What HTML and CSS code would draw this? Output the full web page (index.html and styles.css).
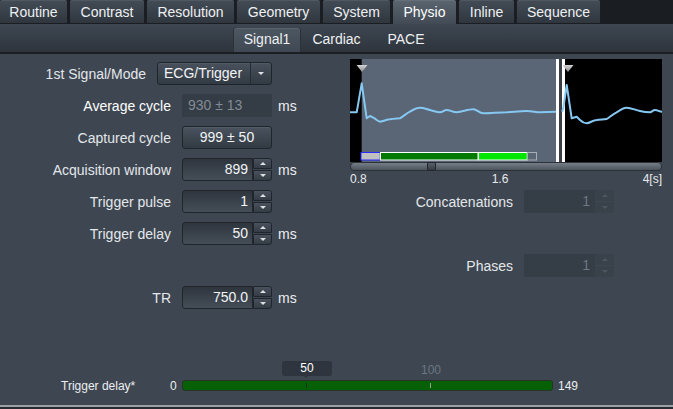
FILE: index.html
```html
<!DOCTYPE html>
<html>
<head>
<meta charset="utf-8">
<link rel="stylesheet" href="styles.css">
</head>
<body>
<div class="app">
  <nav class="tabs">
    <div class="tab">Routine</div>
    <div class="tab">Contrast</div>
    <div class="tab">Resolution</div>
    <div class="tab">Geometry</div>
    <div class="tab">System</div>
    <div class="tab active">Physio</div>
    <div class="tab">Inline</div>
    <div class="tab">Sequence</div>
  </nav>
  <nav class="subtabs">
    <div class="subtab w66 active">Signal1</div>
    <div class="subtab w73">Cardiac</div>
    <div class="subtab w66">PACE</div>
  </nav>
  <main class="content">
    <div class="panels">
      <section class="left">
        <div class="row">
          <label class="lbl short">1st Signal/Mode</label>
          <div class="dropdown">
            <span class="dd-text">ECG/Trigger</span>
            <span class="dd-btn"><i class="arr-down"></i></span>
          </div>
        </div>
        <div class="row">
          <label class="lbl bright">Average cycle</label>
          <div class="readonly">930 ± 13</div>
          <span class="unit">ms</span>
        </div>
        <div class="row">
          <label class="lbl">Captured cycle</label>
          <div class="button">999 ± 50</div>
        </div>
        <div class="row">
          <label class="lbl">Acquisition window</label>
          <div class="spin">
            <div class="value">899</div>
            <div class="arrows"><span><i class="arr-up"></i></span><span><i class="arr-down"></i></span></div>
          </div>
          <span class="unit">ms</span>
        </div>
        <div class="row">
          <label class="lbl">Trigger pulse</label>
          <div class="spin">
            <div class="value">1</div>
            <div class="arrows"><span><i class="arr-up"></i></span><span><i class="arr-down"></i></span></div>
          </div>
        </div>
        <div class="row">
          <label class="lbl">Trigger delay</label>
          <div class="spin">
            <div class="value">50</div>
            <div class="arrows"><span><i class="arr-up"></i></span><span><i class="arr-down"></i></span></div>
          </div>
          <span class="unit">ms</span>
        </div>
        <div class="row"></div>
        <div class="row">
          <label class="lbl">TR</label>
          <div class="spin">
            <div class="value">750.0</div>
            <div class="arrows"><span><i class="arr-up"></i></span><span><i class="arr-down"></i></span></div>
          </div>
          <span class="unit">ms</span>
        </div>
      </section>

      <section class="right">
        <svg class="chart" width="312" height="103" viewBox="0 0 312 103">
          <defs>
            <linearGradient id="tri" x1="0" y1="0" x2="0" y2="1">
              <stop offset="0" stop-color="#d4d4d4"/>
              <stop offset="1" stop-color="#8a8a8a"/>
            </linearGradient>
          </defs>
          <rect x="0" y="0" width="312" height="103" fill="#000"/>
          <rect x="11.7" y="0" width="194.3" height="103" fill="#5a6575"/>
          <rect x="206" y="0" width="3" height="103" fill="#fff"/>
          <rect x="209" y="0" width="3" height="103" fill="#3a3f45"/>
          <rect x="212" y="0" width="3" height="103" fill="#fff"/>
          <path fill="none" stroke="#86c8f2" stroke-width="2" stroke-linejoin="round"
            d="M0,53.3 L6.7,53.3 L11.7,24.3 L16.7,59.3 L20,57 L23.3,58.7 C26,60 28,62.7 30,62.7 C34,62 37,60.3 40,60.3 C44,59.8 47,59.6 50,59.3 C54,57 57,54 60,52.7 C64,50 67,48.7 70,48.7 C74,48.7 77,50.5 80,51 C84,52 87,53.3 90,53.3 C93,53 94,51 96.7,51 C100,51 103,53.3 106.7,53.3 C112,53 118,50.3 123.3,50.3 C127,50.3 129,54.3 133.3,54.3 C141,54.3 149,53.3 156.7,53.3 C163,53 170,52 176.7,52 C182,52 186,53.3 190,53.3 L206,52.7"/>
          <path fill="none" stroke="#86c8f2" stroke-width="2" stroke-linejoin="round"
            d="M212,52.7 L213.3,49.3 L216.7,26 L221.7,59.3 L226.7,57.7 L230,61 C232,63 234,64.3 236.7,64.3 C240,64 243,61 246.7,61 C250,60.5 253,60.5 256.7,60 C260,58 263,55 266.7,53.3 C270,51 273,48.7 276.7,48.7 C281,48.7 285,51 290,52 C294,53 297,53.3 300,53.3 C302,53 303,51 305,51 C308,51 309,52.7 312,52.7"/>
          <polygon points="6.5,6 17.5,6 12,13" fill="url(#tri)"/>
          <polygon points="212.5,6 223.5,6 218,13" fill="url(#tri)"/>
          <rect x="11" y="93.5" width="19.3" height="7.5" fill="#c0c0c0" stroke="#2a2aff" stroke-width="1"/>
          <rect x="30.5" y="93.5" width="97.5" height="7.5" fill="#007a00" stroke="#ffffff" stroke-width="1"/>
          <rect x="128.5" y="93.5" width="48.8" height="7.5" fill="#00e600" stroke="#ffffff" stroke-width="1"/>
          <rect x="177.5" y="93.5" width="9" height="7.5" fill="none" stroke="#a8aeb6" stroke-width="1"/>
        </svg>
        <div class="scroll"><div class="thumb"></div></div>
        <div class="axis">
          <span>0.8</span><span class="mid">1.6</span><span class="end">4[s]</span>
        </div>
        <div class="rrow first">
          <label class="rlbl">Concatenations</label>
          <div class="spin disabled">
            <div class="value">1</div>
            <div class="arrows"><span><i class="arr-up"></i></span><span><i class="arr-down"></i></span></div>
          </div>
        </div>
        <div class="rrow second">
          <label class="rlbl">Phases</label>
          <div class="spin disabled">
            <div class="value">1</div>
            <div class="arrows"><span><i class="arr-up"></i></span><span><i class="arr-down"></i></span></div>
          </div>
        </div>
      </section>
    </div>

    <section class="slider-row">
      <span class="s-label">Trigger delay*</span>
      <span class="s-min">0</span>
      <div class="track">
        <i class="tick t1"></i>
        <i class="tick t2"></i>
        <div class="tip">50</div>
        <div class="mark">100</div>
      </div>
      <span class="s-max">149</span>
    </section>
  </main>
  <footer class="edge"></footer>
</div>
</body>
</html>
```
FILE: styles.css
```css
* { box-sizing: border-box; }
body {
  margin: 0;
  background: #3d4651;
  font-family: "Liberation Sans", Arial, sans-serif;
  color: #e6e9ec;
}
.app {
  width: 673px;
  height: 409px;
  display: flex;
  flex-direction: column;
  overflow: hidden;
}

/* top tabs */
.tabs {
  height: 24px;
  flex: none;
  display: grid;
  grid-template-columns: 67px 74px 87px 83px 67px 63px 55px 83px;
  column-gap: 3px;
  align-items: start;
  background: #1a1e23;
}
.tab {
  height: 23px;
  line-height: 24px;
  text-align: center;
  font-size: 14px;
  color: #eef0f2;
  background: linear-gradient(#434c56, #2f363e);
  border-radius: 2px 2px 0 0;
  box-shadow: inset 0 1px 0 rgba(255,255,255,0.07);
}
.tab.active {
  height: 24px;
  background: linear-gradient(#5b6570, #414a55);
  color: #ffffff;
}

/* sub tabs */
.subtabs {
  height: 30px;
  flex: none;
  display: flex;
  justify-content: center;
  align-items: flex-end;
  background: linear-gradient(#3e4752, #2d343c);
  border-bottom: 2px solid #1b1f24;
}
.subtab {
  height: 24px;
  line-height: 22px;
  text-align: center;
  font-size: 14px;
  color: #eef0f2;
}
.w66 { width: 66px; }
.w73 { width: 73px; }
.subtab.active {
  background: linear-gradient(#4d5762, #3f4853);
  border-radius: 3px 3px 0 0;
  box-shadow: inset 0 1px 0 rgba(255,255,255,0.08), 1px 0 0 #2c3238, -1px 0 0 #2c3238;
}

/* content */
.content {
  flex: 1;
  display: flex;
  flex-direction: column;
}
.panels {
  display: flex;
}
.left {
  width: 350px;
  padding-top: 8px;
}
.row {
  height: 23px;
  margin-bottom: 9px;
  display: flex;
  align-items: center;
}
.lbl {
  width: 171px;
  text-align: right;
  font-size: 14px;
  margin-right: 11px;
  color: #e4e7ea;
}
.lbl.short { width: 146px; }
.lbl.bright { color: #ffffff; }
.unit {
  margin-left: 6px;
  font-size: 14px;
  color: #eceef0;
}

.dropdown {
  width: 115px;
  height: 23px;
  display: flex;
  border: 1px solid #1f252b;
  border-radius: 3px;
  background: linear-gradient(#48515c, #323a43);
  box-shadow: inset 0 1px 0 rgba(255,255,255,0.06);
}
.dd-text {
  flex: 1;
  padding-left: 6px;
  font-size: 14px;
  line-height: 21px;
  color: #f2f4f6;
}
.dd-btn {
  width: 21px;
  border-left: 1px solid #262c33;
  display: flex;
  align-items: center;
  justify-content: center;
}

.readonly {
  width: 90px;
  height: 23px;
  background: #343c45;
  border-radius: 2px;
  font-size: 14px;
  line-height: 23px;
  padding-left: 6px;
  color: #838b95;
}
.button {
  width: 90px;
  height: 23px;
  border: 1px solid #1f252b;
  border-radius: 3px;
  background: linear-gradient(#4a535e, #323a43);
  box-shadow: inset 0 1px 0 rgba(255,255,255,0.06);
  text-align: center;
  font-size: 14px;
  line-height: 21px;
  color: #f2f4f6;
}

.spin {
  width: 90px;
  height: 23px;
  display: flex;
}
.spin .value {
  width: 71px;
  border: 1px solid #1f252b;
  border-radius: 3px 0 0 3px;
  background: linear-gradient(#2e353d, #454e58);
  text-align: right;
  padding-right: 4px;
  font-size: 14px;
  line-height: 21px;
  color: #f2f4f6;
}
.spin .arrows {
  width: 19px;
  display: flex;
  flex-direction: column;
  gap: 1px;
}
.spin .arrows span {
  flex: 1;
  display: flex;
  align-items: center;
  justify-content: center;
  background: linear-gradient(#49525d, #343c45);
  border: 1px solid #1f252b;
}
.spin .arrows span:first-child { border-radius: 0 3px 0 0; }
.spin .arrows span:last-child { border-radius: 0 0 3px 0; }

.arr-up, .arr-down {
  width: 0;
  height: 0;
  border-left: 3px solid transparent;
  border-right: 3px solid transparent;
}
.arr-up { border-bottom: 3px solid #dfe2e5; }
.arr-down { border-top: 3px solid #dfe2e5; }

.spin.disabled .value {
  background: #353d46;
  border-color: #353d46;
  color: #6f7782;
  border-radius: 2px 0 0 2px;
}
.spin.disabled .arrows span {
  background: #39414a;
  border-color: #39414a;
}
.spin.disabled .arr-up { border-bottom-color: #4e5660; }
.spin.disabled .arr-down { border-top-color: #4e5660; }

/* right */
.right {
  width: 312px;
  padding-top: 5px;
}
.chart { display: block; }
.scroll {
  position: relative;
  height: 9px;
  border: 1px solid #2b3137;
  border-radius: 4px;
  background: linear-gradient(#757d87, #4c545e);
}
.thumb {
  position: absolute;
  left: 76px;
  top: -1px;
  width: 9px;
  height: 9px;
  border: 1px solid #22272c;
  border-radius: 2px;
  background: linear-gradient(#59616b, #343b43);
}
.axis {
  display: flex;
  height: 19px;
  font-size: 12px;
  line-height: 14px;
  padding-top: 1px;
  color: #e8eaec;
}
.axis .mid { margin-left: 125px; }
.axis .end { margin-left: auto; }

.rrow {
  display: flex;
  align-items: center;
  height: 23px;
}
.rrow.second { margin-top: 41px; }
.rlbl {
  width: 163px;
  text-align: right;
  margin-right: 11px;
  font-size: 14px;
  color: #e4e7ea;
}

/* slider */
.slider-row {
  margin-top: 62px;
  height: 11px;
  display: flex;
  align-items: center;
  padding-left: 61px;
  font-size: 12px;
  color: #eceef0;
}
.s-label { width: 109px; }
.s-min { width: 12px; }
.s-max { margin-left: 5px; }
.track {
  position: relative;
  width: 371px;
  height: 11px;
  background: #066106;
  border: 1px solid #263326;
  border-radius: 3px;
}
.tick {
  position: absolute;
  top: 2px;
  width: 1px;
  height: 5px;
}
.tick.t1 { left: 123px; background: #183318; }
.tick.t2 { left: 247px; background: #8fa08f; }
.tip {
  position: absolute;
  left: 99px;
  top: -20px;
  width: 50px;
  height: 15px;
  background: #2e353e;
  border-radius: 3px;
  text-align: center;
  line-height: 15px;
  color: #ffffff;
}
.tip::after {
  content: "";
  position: absolute;
  left: 22px;
  top: 15px;
  border-left: 2px solid transparent;
  border-right: 2px solid transparent;
  border-top: 2px solid #2e353e;
}
.mark {
  position: absolute;
  left: 238px;
  top: -17px;
  color: #6c7682;
  line-height: 12px;
}

.edge {
  flex: none;
  height: 4px;
  border-top: 2px solid #9ca0a5;
  background: #262b31;
}
```
